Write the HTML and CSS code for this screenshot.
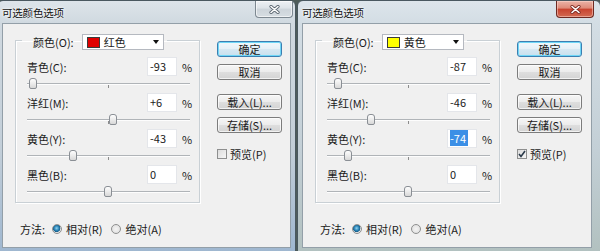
FILE: index.html
```html
<!DOCTYPE html>
<html lang="zh">
<head>
<meta charset="utf-8">
<title>可选颜色选项</title>
<link rel="stylesheet" href="styles.css">
</head>
<body>
<div class="screen">
  <div class="win win-left inactive">
    <div class="titlebar"><span class="title">可选颜色选项</span><span class="close"><svg width="11" height="9" viewBox="0 0 11 9"><path d="M2 1.5 L9 7.5 M9 1.5 L2 7.5" stroke="#5a6570" stroke-width="3.2" stroke-linecap="round"/><path d="M2 1.5 L9 7.5 M9 1.5 L2 7.5" stroke="#fff" stroke-width="1.6" stroke-linecap="round"/></svg></span></div>
    <div class="panel">
      <div class="main">
        <fieldset class="group">
          <legend class="legend"><span class="lbl">颜色(O):</span><span class="select"><span class="swatch swatch-red"></span><span class="sel-text">红色</span><span class="arrow"></span></span></legend>
          <div class="block">
            <div class="row"><span class="lbl grow">青色(C):</span><span class="input">-93</span><span class="pct">%</span></div>
            <div class="slider"><span class="tick"></span><span class="thumb" style="left:2px"></span></div>
          </div>
          <div class="block">
            <div class="row"><span class="lbl grow">洋红(M):</span><span class="input">+6</span><span class="pct">%</span></div>
            <div class="slider"><span class="tick"></span><span class="thumb" style="left:82px"></span></div>
          </div>
          <div class="block">
            <div class="row"><span class="lbl grow">黄色(Y):</span><span class="input">-43</span><span class="pct">%</span></div>
            <div class="slider"><span class="tick"></span><span class="thumb" style="left:42px"></span></div>
          </div>
          <div class="block">
            <div class="row"><span class="lbl grow">黑色(B):</span><span class="input">0</span><span class="pct">%</span></div>
            <div class="slider"><span class="tick"></span><span class="thumb" style="left:77px"></span></div>
          </div>
        </fieldset>
        <div class="buttons">
          <span class="btn btn-default">确定</span>
          <span class="btn">取消</span>
          <span class="btn btn-sep">载入(L)...</span>
          <span class="btn">存储(S)...</span>
          <span class="check-row"><span class="checkbox"></span><span class="lbl">预览(P)</span></span>
        </div>
      </div>
      <div class="method">
        <span class="lbl">方法:</span>
        <span class="radio checked"></span><span class="lbl">相对(R)</span>
        <span class="radio radio-second"></span><span class="lbl">绝对(A)</span>
      </div>
    </div>
  </div>

  <div class="win win-right active">
    <div class="titlebar"><span class="title">可选颜色选项</span><span class="close"><svg width="11" height="9" viewBox="0 0 11 9"><path d="M2 1.5 L9 7.5 M9 1.5 L2 7.5" stroke="#7a2a22" stroke-width="3.2" stroke-linecap="round"/><path d="M2 1.5 L9 7.5 M9 1.5 L2 7.5" stroke="#fff" stroke-width="1.6" stroke-linecap="round"/></svg></span></div>
    <div class="panel">
      <div class="main">
        <fieldset class="group">
          <legend class="legend"><span class="lbl">颜色(O):</span><span class="select"><span class="swatch swatch-yellow"></span><span class="sel-text">黄色</span><span class="arrow"></span></span></legend>
          <div class="block">
            <div class="row"><span class="lbl grow">青色(C):</span><span class="input">-87</span><span class="pct">%</span></div>
            <div class="slider"><span class="tick"></span><span class="thumb" style="left:7px"></span></div>
          </div>
          <div class="block">
            <div class="row"><span class="lbl grow">洋红(M):</span><span class="input">-46</span><span class="pct">%</span></div>
            <div class="slider"><span class="tick"></span><span class="thumb" style="left:40px"></span></div>
          </div>
          <div class="block">
            <div class="row"><span class="lbl grow">黄色(Y):</span><span class="input"><span class="selected">-74</span></span><span class="pct">%</span></div>
            <div class="slider"><span class="tick"></span><span class="thumb" style="left:17px"></span></div>
          </div>
          <div class="block">
            <div class="row"><span class="lbl grow">黑色(B):</span><span class="input">0</span><span class="pct">%</span></div>
            <div class="slider"><span class="tick"></span><span class="thumb" style="left:77px"></span></div>
          </div>
        </fieldset>
        <div class="buttons">
          <span class="btn btn-default">确定</span>
          <span class="btn">取消</span>
          <span class="btn btn-sep">载入(L)...</span>
          <span class="btn">存储(S)...</span>
          <span class="check-row"><span class="checkbox"><svg width="8" height="8" viewBox="0 0 8 8"><path d="M1 4 L3 6.5 L7 1" fill="none" stroke="#2a3a4a" stroke-width="1.6"/></svg></span><span class="lbl">预览(P)</span></span>
        </div>
      </div>
      <div class="method">
        <span class="lbl">方法:</span>
        <span class="radio checked"></span><span class="lbl">相对(R)</span>
        <span class="radio radio-second"></span><span class="lbl">绝对(A)</span>
      </div>
    </div>
  </div>
</div>
</body>
</html>
```

FILE: styles.css
```css
html, body {
  margin: 0;
  padding: 0;
}
body {
  width: 600px;
  height: 251px;
  overflow: hidden;
  background: #4f5d5a;
  font-family: "Noto Sans CJK SC", "Noto Sans", sans-serif;
  font-size: 11px;
  color: #1b1b1b;
}
.screen {
  display: flex;
  gap: 1px;
  width: 610px;
}
.win {
  flex: none;
  width: 299px;
  height: 252px;
  box-sizing: border-box;
  border: 1px solid #4a5860;
  border-radius: 6px 6px 0 0;
  padding: 0 4px 3px 4px;
  background: linear-gradient(to bottom, #dfe6ec 0, #d2dce4 22px, #c6d2da 60%, #b9c8cf 100%);
  display: flex;
  flex-direction: column;
}
.win-left {
  margin-left: -3px;
  background: linear-gradient(to bottom, #dde4ea 0, #d0d9e0 22px, #c2ced8 60%, #9fb7d0 100%);
}
.win-right {
  width: 304px;
  padding-right: 8px;
  background: linear-gradient(to bottom, #dde5eb 0, #d3dde4 22px, #c3cfd6 60%, #b2c1c0 100%);
}
.titlebar {
  height: 22px;
  display: flex;
  align-items: flex-start;
}
.title {
  margin-top: 5px;
  font-size: 10.5px;
  letter-spacing: -0.2px;
  color: #111;
  text-shadow: 0 0 4px #fff, 0 0 2px #fff;
  line-height: 14px;
}
.close {
  margin-left: auto;
  margin-right: -2px;
  width: 38px;
  height: 17px;
  box-sizing: border-box;
  border: 1px solid #7d8891;
  border-top: none;
  border-radius: 0 0 4px 4px;
  display: flex;
  align-items: center;
  justify-content: center;
  background: linear-gradient(to bottom, #eef1f4 0, #dde3e8 45%, #cdd4da 50%, #d6dde2 100%);
  box-shadow: inset 0 0 0 1px rgba(255,255,255,0.6);
}
.active .close {
  border-color: #6e2a22;
  background: linear-gradient(to bottom, #eab3a7 0, #de8a78 45%, #c8432f 50%, #d26a52 100%);
  box-shadow: inset 0 0 0 1px rgba(255,220,210,0.5);
}
.panel {
  flex: none;
  height: 225px;
  box-sizing: border-box;
  border: 1px solid #939fa8;
  background: #f0f0f0;
  display: flex;
  flex-direction: column;
}
.main {
  display: flex;
  align-items: flex-start;
}
.group {
  margin: 6px 0 0 12px;
  width: 185px;
  box-sizing: border-box;
  padding: 7px 9px 1px 11px;
  border: 1px solid #c9d0d5;
  box-shadow: 1px 1px 0 #fff, inset 1px 1px 0 #fff;
  min-width: 0;
}
.legend {
  margin-left: -5px;
  padding: 4px 3px 0 11px;
  height: 20px;
  box-sizing: border-box;
  display: flex;
  align-items: center;
}
.lbl {
  white-space: nowrap;
  line-height: 14px;
}
.grow {
  flex: 1;
}
.select {
  margin-left: 8px;
  width: 82px;
  height: 16px;
  box-sizing: border-box;
  border: 1px solid #b5b9c0;
  background: #fff;
  display: flex;
  align-items: center;
  padding-left: 4px;
}
.swatch {
  width: 13px;
  height: 11px;
  box-sizing: border-box;
  border: 1px solid #3a3a3a;
}
.swatch-red { background: #e00000; }
.swatch-yellow { background: #ffff00; }
.sel-text {
  margin-left: 4px;
  line-height: 14px;
}
.arrow {
  margin-left: auto;
  margin-right: 4px;
  width: 0;
  height: 0;
  border-left: 3px solid transparent;
  border-right: 3px solid transparent;
  border-top: 4px solid #111;
}
.block {
  height: 36px;
}
.row {
  height: 19px;
  display: flex;
  align-items: center;
}
.input {
  width: 30px;
  height: 19px;
  box-sizing: border-box;
  background: #fff;
  border: 1px solid #e4e6ea;
  padding-left: 2px;
  line-height: 17px;
}
.selected {
  display: inline-block;
  height: 16px;
  margin-top: 0;
  padding: 0 2px 0 0;
  background: #3b8fe6;
  color: #fff;
  line-height: 17px;
}
.pct {
  margin-left: 5px;
  width: 8px;
}
.slider {
  position: relative;
  height: 17px;
}
.slider::before {
  content: "";
  position: absolute;
  left: 0;
  right: 0;
  top: 7px;
  height: 1px;
  background: #b0b4b8;
  box-shadow: 0 1px 0 #fdfdfd;
}
.tick {
  position: absolute;
  left: 81px;
  top: 9px;
  width: 1px;
  height: 3px;
  background: #8c8c8c;
}
.thumb {
  position: absolute;
  top: 2px;
  width: 8px;
  height: 11px;
  box-sizing: border-box;
  border: 1px solid #8a8f95;
  border-radius: 3px 3px 2px 2px;
  background: linear-gradient(to bottom, #fdfdfd 0, #ececec 50%, #d8d8d8 100%);
}
.buttons {
  margin: 17px 0 0 17px;
  width: 65px;
  display: flex;
  flex-direction: column;
  gap: 7px;
}
.btn {
  height: 16px;
  box-sizing: border-box;
  border: 1px solid #7c7c7c;
  border-radius: 3px;
  background: linear-gradient(to bottom, #f6f6f6 0, #ececec 48%, #dedede 52%, #d3d3d3 100%);
  box-shadow: inset 0 0 0 1px rgba(255,255,255,0.7);
  text-align: center;
  line-height: 14px;
  white-space: nowrap;
}
.btn-default {
  border-color: #3c7fb1;
  box-shadow: inset 0 0 0 1px #6fd7f7;
  background: linear-gradient(to bottom, #f2f8fb 0, #e6f1f7 48%, #d6e8f2 52%, #c8e0ee 100%);
}
.btn-sep {
  margin-top: 7px;
}
.check-row {
  margin-top: 7px;
  display: flex;
  align-items: center;
  gap: 3px;
}
.checkbox {
  width: 10px;
  height: 10px;
  box-sizing: border-box;
  border: 1px solid #8e8f8f;
  background: linear-gradient(135deg, #dcdcdc 0, #f6f6f6 100%);
  display: flex;
  align-items: center;
  justify-content: center;
}
.method {
  margin: 19px 0 0 17px;
  height: 14px;
  display: flex;
  align-items: center;
}
.radio {
  margin: 0 4px 0 7px;
  width: 10px;
  height: 10px;
  box-sizing: border-box;
  border-radius: 50%;
  border: 1px solid #8e8f8f;
  background: radial-gradient(circle at 50% 50%, #f4f4f4 0, #dcdcdc 100%);
}
.radio.checked {
  background: radial-gradient(circle at 45% 40%, #8fd4f2 0, #2d86b8 35%, #165e8a 55%, #e8e8e8 62%, #d8d8d8 100%);
}
.radio-second {
  margin-left: 9px;
}
```
